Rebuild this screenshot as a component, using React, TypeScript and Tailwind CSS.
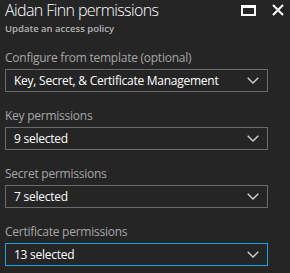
import React from 'react';

const FONT = { fontFamily: '"Open Sans", "Noto Sans", sans-serif' };

function Chevron() {
  return (
    <svg width="12" height="7" viewBox="0 0 12 7" fill="none" className="shrink-0">
      <path d="M0.7 0.7 L6 6 L11.3 0.7" stroke="#d0d0d0" strokeWidth="1.4" />
    </svg>
  );
}

function Field({ label, value, active }: { label: string; value: string; active?: boolean }) {
  return (
    <div className="mb-[14px]">
      <div className="h-[20px] text-[12px] leading-[20px] tracking-[-0.25px] text-[#a6a6a6]">{label}</div>
      <div
        className={`mt-[1px] flex h-[23px] w-[263px] items-center justify-between border pl-[8px] pr-[8px] ${
          active ? 'border-[#1ba1e2]' : 'border-[#6a6a6a]'
        }`}
      >
        <span className="text-[12px] tracking-[-0.25px] text-white">{value}</span>
        <Chevron />
      </div>
    </div>
  );
}

export default function App() {
  return (
    <div className="h-[273px] w-[290px] overflow-hidden bg-[#252526] pl-[5px]" style={FONT}>
      {/* Header */}
      <div className="flex h-[35px] items-start justify-between pr-[6px]">
        <div>
          <div className="h-[22px] text-[16px] font-light leading-[21px] tracking-[-0.6px] text-white">
            Aidan Finn permissions
          </div>
          <div className="h-[13px] text-[9.5px] font-semibold leading-[13px] text-[#b4b4b4]">Update an access policy</div>
        </div>
        <div className="flex items-center gap-[16px] pt-[4px]">
          <div className="h-[11px] w-[15px] border-2 border-t-[3px] border-white" />
          <svg width="12" height="12" viewBox="0 0 12 12">
            <path d="M1 1 L11 11 M11 1 L1 11" stroke="#fff" strokeWidth="2" />
          </svg>
        </div>
      </div>

      <div className="pt-[13px]">
        <Field label="Configure from template (optional)" value="Key, Secret, & Certificate Management" />
        <Field label="Key permissions" value="9 selected" />
        <Field label="Secret permissions" value="7 selected" />
        <Field label="Certificate permissions" value="13 selected" active />
      </div>
    </div>
  );
}
